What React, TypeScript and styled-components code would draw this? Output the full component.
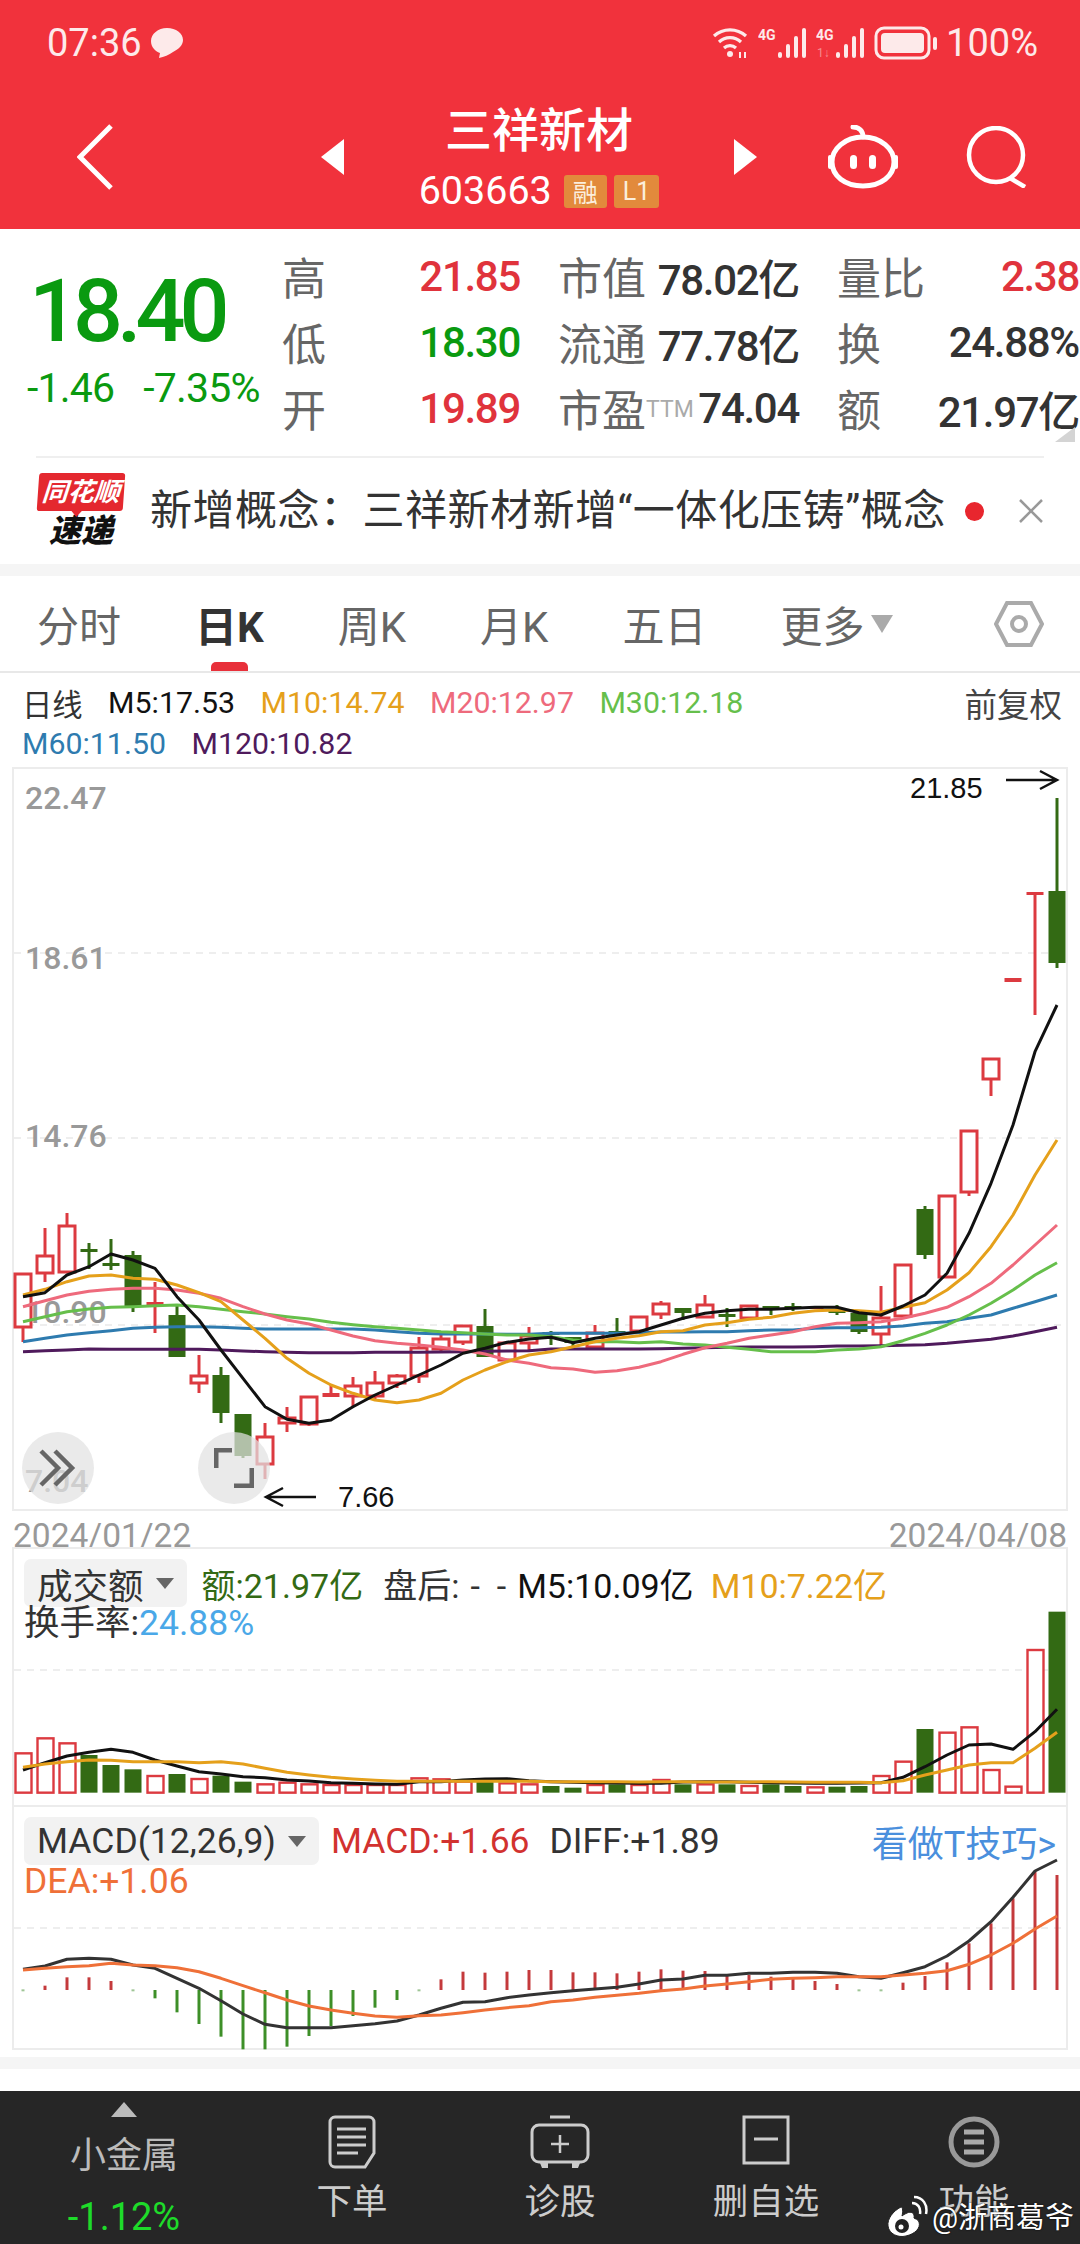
import { FC } from 'react'
import styled, { createGlobalStyle } from 'styled-components'

const GlobalStyle = createGlobalStyle`
  html, body { margin: 0; padding: 0; background: #fff; }
  body { font-family: Roboto, "Noto Sans CJK SC", sans-serif; }
`

const RED = '#dc3a40'
const GREEN = '#336a14'
const ORANGE = '#e5a01b'
const PINK = '#ee6a7c'
const LIME = '#66bf4b'
const BLUE = '#2e7baf'
const PURPLE = '#4f1a5c'

const xAt = (i: number) => 23 + 22 * i

// zoomed chart readings, left half and right half have their own base
const toLine = (left: number[], leftBase: number, right: number[], rightBase: number) =>
  [...left.map((y) => leftBase + y / 3), ...right.map((y) => rightBase + y / 3)]
    .map((y, i) => `${xAt(i)},${y.toFixed(1)}`)
    .join(' ')

// top, bottom, high, low, colour
type Candle = [number, number, number, number, 'r' | 'g']
const candles: Candle[] = [
  [1274, 1327, 1274, 1342, 'r'], [1256, 1273, 1228, 1282, 'r'], [1226, 1272, 1213, 1272, 'r'],
  [1249, 1252, 1243, 1269, 'g'], [1263, 1266, 1239, 1270, 'g'], [1255, 1306, 1251, 1312, 'g'],
  [1302, 1305, 1282, 1333, 'r'], [1315, 1357, 1304, 1357, 'g'], [1376, 1383, 1355, 1393, 'r'],
  [1375, 1413, 1367, 1423, 'g'], [1414, 1456, 1414, 1458, 'g'], [1437, 1464, 1423, 1479, 'r'],
  [1418, 1423, 1407, 1432, 'r'], [1397, 1424, 1397, 1426, 'r'], [1393, 1397, 1385, 1397, 'r'],
  [1386, 1396, 1377, 1406, 'r'], [1383, 1396, 1371, 1400, 'r'], [1376, 1383, 1374, 1388, 'r'],
  [1348, 1376, 1337, 1383, 'r'], [1339, 1349, 1332, 1352, 'r'], [1326, 1342, 1326, 1345, 'r'],
  [1326, 1357, 1309, 1357, 'g'], [1343, 1360, 1343, 1362, 'r'], [1336, 1343, 1327, 1350, 'r'],
  [1332, 1335, 1331, 1345, 'g'], [1337, 1343, 1337, 1347, 'g'], [1333, 1347, 1325, 1347, 'r'],
  [1331, 1335, 1318, 1335, 'g'], [1317, 1331, 1317, 1331, 'r'], [1304, 1314, 1301, 1319, 'r'],
  [1308, 1313, 1308, 1320, 'g'], [1305, 1317, 1295, 1318, 'r'], [1314, 1317, 1308, 1327, 'g'],
  [1306, 1318, 1306, 1318, 'r'], [1306, 1309, 1306, 1315, 'g'], [1306, 1308, 1303, 1311, 'g'],
  [1307, 1309, 1307, 1309, 'r'], [1309, 1313, 1305, 1315, 'g'], [1313, 1332, 1313, 1334, 'g'],
  [1318, 1334, 1286, 1345, 'r'], [1265, 1316, 1265, 1316, 'r'], [1209, 1255, 1206, 1259, 'g'],
  [1196, 1277, 1196, 1277, 'r'], [1131, 1192, 1131, 1196, 'r'], [1059, 1079, 1059, 1096, 'r'],
  [978, 982, 978, 982, 'r'], [892, 895, 892, 1015, 'r'], [891, 963, 798, 968, 'g'],
]

const m5 = toLine(
  [440, 428, 375, 350, 312, 330, 355, 440, 510, 600, 685, 770, 808, 820, 810, 770, 735, 705, 675, 645, 610, 595, 577, 567], 1150,
  [1012, 1028, 1015, 1005, 995, 975, 955, 940, 932, 928, 928, 925, 922, 922, 938, 945, 918, 885, 820, 700, 550, 375, 155, 15], 1000,
)
const m10 = toLine(
  [435, 418, 395, 378, 375, 385, 388, 405, 428, 455, 510, 565, 625, 670, 705, 730, 750, 758, 750, 730, 690, 660, 635, 615], 1150,
  [1055, 1040, 1025, 1015, 1007, 995, 992, 975, 968, 958, 952, 940, 932, 930, 932, 937, 922, 908, 870, 818, 740, 645, 525, 420], 1000,
)
const m20 = toLine(
  [470, 452, 435, 424, 418, 415, 415, 420, 430, 445, 470, 492, 510, 522, 540, 558, 572, 580, 585, 592, 600, 612, 630, 640], 1150,
  [1103, 1107, 1117, 1112, 1102, 1085, 1063, 1043, 1030, 1015, 1005, 995, 980, 970, 968, 965, 955, 940, 922, 890, 850, 795, 735, 675], 1000,
)
const m30 = toLine(
  [515, 500, 485, 477, 472, 470, 467, 465, 470, 478, 485, 492, 500, 507, 517, 524, 530, 535, 540, 545, 548, 552, 555, 555], 1150,
  [1010, 1020, 1025, 1025, 1028, 1025, 1032, 1035, 1042, 1048, 1055, 1055, 1055, 1050, 1047, 1040, 1022, 1000, 975, 945, 910, 870, 825, 788], 1000,
)
const m60 = toLine(
  [575, 565, 555, 548, 542, 535, 532, 530, 530, 532, 535, 537, 537, 537, 537, 537, 540, 545, 550, 552, 552, 552, 553, 553], 1150,
  [1000, 1000, 1000, 1000, 998, 996, 996, 995, 995, 992, 990, 990, 985, 983, 983, 982, 978, 970, 965, 955, 945, 925, 905, 885], 1000,
)
const m120 = toLine(
  [605, 602, 600, 597, 598, 598, 598, 598, 598, 600, 603, 605, 607, 608, 608, 608, 607, 607, 607, 606, 605, 604, 603, 602], 1150,
  [1047, 1047, 1047, 1047, 1047, 1046, 1045, 1043, 1042, 1041, 1041, 1041, 1040, 1038, 1038, 1037, 1036, 1034, 1030, 1024, 1018, 1008, 995, 982], 1000,
)

const volBars: [number, 'r' | 'g'][] = [
  [640, 'r'], [595, 'r'], [610, 'r'], [645, 'g'], [675, 'g'], [688, 'g'], [708, 'r'], [702, 'g'], [717, 'r'], [707, 'g'],
  [725, 'g'], [733, 'r'], [728, 'r'], [733, 'r'], [735, 'r'], [735, 'r'], [735, 'r'], [735, 'r'], [715, 'r'], [718, 'r'],
  [725, 'r'], [718, 'g'], [730, 'r'], [733, 'r'], [738, 'g'], [743, 'g'], [735, 'r'], [733, 'g'], [735, 'r'], [720, 'r'],
  [733, 'g'], [733, 'r'], [733, 'g'], [738, 'r'], [733, 'g'], [738, 'g'], [742, 'r'], [740, 'g'], [738, 'g'], [708, 'r'],
  [665, 'r'], [567, 'g'], [578, 'r'], [562, 'r'], [690, 'r'], [740, 'r'], [330, 'r'], [215, 'g'],
]
const volM5 = toLine(
  [690, 668, 648, 637, 628, 637, 660, 678, 695, 702, 710, 713, 720, 723, 728, 730, 732, 733, 725, 725, 720, 717, 716, 722], 1540,
  [725, 727, 728, 729, 730, 730, 726, 725, 725, 727, 728, 729, 730, 730, 729, 728, 712, 680, 645, 615, 612, 628, 575, 508], 1540,
)
const volM10 = toLine(
  [682, 672, 665, 660, 661, 665, 665, 665, 668, 665, 672, 685, 697, 705, 712, 717, 721, 724, 724, 724, 724, 724, 724, 724], 1540,
  [725, 725, 725, 725, 726, 725, 725, 726, 726, 726, 725, 726, 727, 727, 727, 728, 722, 705, 690, 675, 668, 668, 625, 577], 1540,
)

const macdBars = [
  603, 587, 562, 562, 573, 603, 625, 667, 702, 740, 778, 778, 770, 738, 708, 678, 653, 630, 597, 568, 545, 548, 545, 540,
  540, 547, 547, 550, 545, 538, 542, 543, 553, 555, 560, 565, 573, 582, 603, 603, 578, 558, 517, 460, 400, 325, 245, 255,
]
const diff = toLine(
  [538, 528, 508, 505, 508, 525, 535, 565, 595, 632, 672, 703, 713, 713, 713, 707, 701, 693, 675, 655, 637, 635, 623, 615], 1790,
  [608, 602, 597, 592, 582, 570, 567, 556, 556, 550, 550, 547, 547, 550, 560, 565, 548, 530, 498, 453, 395, 322, 243, 210], 1790,
)
const dea = toLine(
  [540, 535, 530, 527, 520, 525, 527, 533, 545, 565, 587, 608, 630, 648, 660, 670, 678, 682, 677, 675, 668, 660, 653, 647], 1790,
  [635, 630, 622, 616, 610, 602, 597, 588, 582, 575, 568, 565, 563, 560, 560, 560, 555, 550, 542, 523, 495, 460, 417, 378], 1790,
)

const Page = styled.div`
  width: 1080px;
  height: 2244px;
  overflow: hidden;
  position: relative;
  display: flex;
  flex-direction: column;
  background: #fff;
`

const Header = styled.header`
  height: 229px;
  background: #f1323c;
  color: #fff;
  display: flex;
  flex-direction: column;
`

const StatusBar = styled.div`
  height: 85px;
  padding: 0 42px 0 47px;
  display: flex;
  align-items: center;
  justify-content: space-between;
`

const StatusGroup = styled.div`
  display: flex;
  align-items: center;
  gap: 8px;
  color: #fdeaea;
`

const StatusText = styled.span`
  font-size: 38px;
  line-height: 44px;
`

const NavBar = styled.div`
  height: 144px;
  padding-left: 77px;
  display: flex;
  align-items: center;
`

const NavTriangle = styled.div<{ $dir: 'left' | 'right' }>`
  width: 0;
  height: 0;
  border-top: 18px solid transparent;
  border-bottom: 18px solid transparent;
  ${(p) => (p.$dir === 'left' ? 'border-right: 23px solid #fff; margin-left: 207px;' : 'border-left: 23px solid #fff;')}
`

const NavCenter = styled.div`
  width: 390px;
  height: 144px;
  padding-top: 19px;
  box-sizing: border-box;
  display: flex;
  flex-direction: column;
  align-items: center;
`

const NavAction = styled.div<{ $ml: number }>`
  margin-left: ${(p) => p.$ml}px;
  display: flex;
`

const StockName = styled.div`
  font-size: 47px;
  line-height: 54px;
  font-weight: 500;
`

const CodeRow = styled.div`
  margin-top: 15px;
  display: flex;
  align-items: center;
  gap: 7px;
`

const StockCode = styled.span`
  font-size: 39.5px;
  line-height: 36px;
  margin-right: 5px;
`

const Badge = styled.span`
  height: 33px;
  padding: 0 9px;
  display: flex;
  align-items: center;
  border-radius: 3px;
  background: #e28a3c;
  color: #fbeedd;
  font-size: 25px;
`

const QuoteSection = styled.section`
  height: 227px;
  padding: 14px 0 0 27px;
  box-sizing: border-box;
  position: relative;
  display: flex;
`

const PriceColumn = styled.div`
  width: 255px;
  color: #0a9a10;
`

const Price = styled.div`
  padding-left: 2px;
  font-size: 88px;
  line-height: 92px;
  font-weight: 500;
  letter-spacing: -6px;
  margin-top: 22px;
`

const PriceChange = styled.div`
  margin-top: 9px;
  display: flex;
  gap: 29px;
  font-size: 41px;
  line-height: 44px;
  letter-spacing: -0.8px;
`

const QuoteGrid = styled.div`
  display: grid;
  grid-template-columns: 238px 241px 242px;
  grid-auto-rows: 66px;
  column-gap: 38px;
`

const QuoteCell = styled.div`
  display: flex;
  align-items: center;
  justify-content: space-between;
  white-space: nowrap;
`

const QuoteLabel = styled.span`
  font-size: 44px;
  color: #666;
`

const QuoteValue = styled.span<{ $color?: string }>`
  font-size: 42px;
  font-weight: 500;
  letter-spacing: -1.3px;
  color: ${(p) => p.$color || '#333'};
`

const Ttm = styled.sup`
  font-size: 23px;
  color: #aaa;
  vertical-align: 10px;
  line-height: 0;
`

const CornerMark = styled.div`
  position: absolute;
  right: 5px;
  top: 198px;
  width: 0;
  height: 0;
  border-left: 20px solid transparent;
  border-bottom: 15px solid #d4d4d4;
`

const NewsWrap = styled.div`
  height: 108px;
  padding: 0 36px;
`

const NewsRow = styled.div`
  height: 106px;
  border-top: 2px solid #efefef;
  display: flex;
  align-items: center;
`

const NewsLogo = styled.div`
  width: 90px;
  height: 76px;
  display: flex;
  flex-direction: column;
  align-items: center;
`

const LogoFlag = styled.div`
  width: 86px;
  height: 38px;
  background: #e4282f;
  color: #fff;
  border-radius: 3px;
  transform: skewX(-4deg);
  font-size: 26px;
  line-height: 38px;
  font-weight: 700;
  font-style: italic;
  text-align: center;
  position: relative;
  &::after {
    content: '';
    position: absolute;
    left: 34px;
    bottom: -6px;
    border-left: 6px solid transparent;
    border-right: 6px solid transparent;
    border-top: 7px solid #e4282f;
  }
`

const LogoText = styled.div`
  margin-top: 3px;
  color: #111;
  font-size: 32px;
  line-height: 34px;
  font-weight: 900;
  font-style: italic;
`

const NewsText = styled.div`
  margin-left: 24px;
  font-size: 42px;
  line-height: 50px;
  color: #333;
  white-space: nowrap;
  letter-spacing: 0.5px;
`

const NewsDot = styled.div`
  width: 19px;
  height: 19px;
  margin-left: auto;
  border-radius: 50%;
  background: #e8262e;
`

const NewsClose = styled.svg`
  margin-left: 34px;
`

const Band = styled.div<{ $h: number; $grey?: boolean }>`
  height: ${(p) => p.$h}px;
  background: ${(p) => (p.$grey ? '#f5f5f5' : '#fff')};
  flex: none;
`

const TabBar = styled.nav`
  height: 97px;
  padding-left: 37px;
  box-sizing: border-box;
  border-bottom: 2px solid #e8e8e8;
  display: flex;
  align-items: center;
  gap: 74px;
`

const Tab = styled.div<{ $active?: boolean }>`
  position: relative;
  height: 95px;
  display: flex;
  align-items: center;
  font-size: 42px;
  color: ${(p) => (p.$active ? '#333' : '#666')};
  font-weight: ${(p) => (p.$active ? 700 : 400)};
  white-space: nowrap;
  ${(p) =>
    p.$active &&
    `&::after {
      content: '';
      position: absolute;
      left: 16px;
      bottom: 0;
      width: 37px;
      height: 9px;
      border-radius: 5px 5px 0 0;
      background: #e8303a;
    }`}
`

const TabCaret = styled.span`
  width: 0;
  height: 0;
  margin-left: 7px;
  border-left: 11px solid transparent;
  border-right: 11px solid transparent;
  border-top: 18px solid #aaa;
`

const TabSettings = styled.div`
  margin-left: auto;
  margin-right: 36px;
  display: flex;
`

const LegendBlock = styled.div`
  height: 94px;
  padding: 9px 18px 0 22px;
  box-sizing: border-box;
`

const LegendRow = styled.div`
  height: 41px;
  display: flex;
  align-items: center;
  gap: 25.5px;
  font-size: 30.3px;
  white-space: nowrap;
`

const LegendItem = styled.span<{ $color: string }>`
  color: ${(p) => p.$color};
`

const LegendEnd = styled.span`
  margin-left: auto;
  color: #444;
  font-size: 32.5px;
`

const Panel = styled.div<{ $h: number; $noTop?: boolean }>`
  height: ${(p) => p.$h}px;
  margin: 0 12px;
  box-sizing: border-box;
  flex: none;
  border: 2px solid #ececec;
  ${(p) => p.$noTop && 'border-top: 0;'}
  display: grid;
  position: relative;
  & > * {
    grid-area: 1 / 1;
  }
`

const ChartSvg = styled.svg`
  display: block;
  width: 100%;
  height: 100%;
  overflow: visible;
`

const AxisText = styled.text`
  font-family: Roboto, sans-serif;
  font-size: 32px;
  font-weight: 500;
  fill: #999;
`

const MarkText = styled.text`
  font-family: "Liberation Sans", sans-serif;
  font-size: 29px;
  fill: #111;
`

const RoundButton = styled.div<{ $left: number }>`
  position: absolute;
  left: ${(p) => p.$left}px;
  top: 663px;
  width: 72px;
  height: 72px;
  border-radius: 50%;
  background: rgba(226, 226, 226, 0.72);
  display: flex;
  align-items: center;
  justify-content: center;
`

const DateRow = styled.div`
  height: 36px;
  flex: none;
  padding: 10px 13px 0 13px;
  box-sizing: border-box;
  display: flex;
  justify-content: space-between;
  font-size: 33.5px;
  line-height: 29px;
  color: #999;
`

const IndicatorHead = styled.div`
  padding: 10px 10px 0;
  align-self: start;
`

const IndicatorRow = styled.div<{ $size: number; $gap: number }>`
  display: flex;
  align-items: center;
  gap: ${(p) => p.$gap}px;
  height: 48px;
  font-size: ${(p) => p.$size}px;
  white-space: nowrap;
`

const IndicatorRowSecond = styled.div`
  height: 32px;
  font-size: 35.5px;
  line-height: 32px;
  white-space: nowrap;
`

const Chip = styled.div`
  height: 48px;
  padding: 0 13px;
  display: flex;
  align-items: center;
  gap: 12px;
  border-radius: 7px;
  background: #f2f2f2;
  color: #333;
  font-size: 35.5px;
`

const ChipCaret = styled.span`
  width: 0;
  height: 0;
  border-left: 9px solid transparent;
  border-right: 9px solid transparent;
  border-top: 11px solid #666;
`

const IndicatorText = styled.span<{ $color: string; $ml?: number }>`
  color: ${(p) => p.$color};
  margin-left: ${(p) => p.$ml || 0}px;
`

const Dashes = styled.span`
  padding-left: 11px;
  letter-spacing: 17px;
  margin-right: -23px;
`

const TipLink = styled.span`
  margin-left: auto;
  color: #4a8fdd;
  font-size: 36px;
`

const BottomBar = styled.footer`
  flex: 1;
  background: #262626;
  display: grid;
  grid-template-columns: 248px 208px 208px 204px 212px;
`

const MarketCell = styled.div`
  padding-top: 11px;
  display: flex;
  flex-direction: column;
  align-items: center;
`

const MarketCaret = styled.div`
  width: 0;
  height: 0;
  border-left: 13px solid transparent;
  border-right: 13px solid transparent;
  border-bottom: 15px solid #bbb;
`

const MarketName = styled.div`
  margin-top: 19px;
  font-size: 36px;
  line-height: 40px;
  color: #bbb;
`

const MarketPct = styled.div`
  margin-top: 21px;
  font-size: 38px;
  line-height: 40px;
  color: #1edb2a;
`

const ActionCell = styled.div`
  padding-top: 24px;
  display: flex;
  flex-direction: column;
  align-items: center;
`

const ActionIcon = styled.div`
  height: 54px;
  display: flex;
  align-items: flex-start;
`

const ActionLabel = styled.div`
  margin-top: 13px;
  font-size: 35.5px;
  line-height: 40px;
  color: #ccc;
`

const Watermark = styled.div`
  position: absolute;
  right: 6px;
  top: 2195px;
  display: flex;
  align-items: center;
  gap: 4px;
  color: #fff;
  font-size: 29px;
  line-height: 46px;
  text-shadow: 0 0 2px #000;
`

const Wifi: FC = () => (
  <svg width="38" height="32" viewBox="0 0 38 32" fill="none" stroke="#fdeaea" strokeWidth="3.2">
    <path d="M2 9 A24 24 0 0 1 34 9" />
    <path d="M7 15 A16 16 0 0 1 29 15" />
    <path d="M12 21 A9 9 0 0 1 24 21" />
    <circle cx="18" cy="27" r="3" fill="#fdeaea" stroke="none" />
    <path d="M28 25v6M33 25v6" strokeWidth="2" />
  </svg>
)

const Signal: FC<{ sim2?: boolean }> = ({ sim2 }) => (
  <svg width="50" height="32" viewBox="0 0 50 32" fill="#fdeaea">
    <text x="0" y="13" fontFamily="Roboto, sans-serif" fontSize="14" fontWeight="700">4G</text>
    {sim2 && <text x="1" y="30" fontFamily="Roboto, sans-serif" fontSize="12" fill="#f68b90">1↓</text>}
    <rect x="20" y="25" width="4" height="6" rx="2" />
    <rect x="28" y="17" width="4" height="14" rx="2" />
    <rect x="36" y="9" width="4" height="22" rx="2" />
    <rect x="44" y="1" width="4" height="30" rx="2" />
  </svg>
)

const Battery: FC = () => (
  <svg width="64" height="34" viewBox="0 0 64 34" fill="none">
    <rect x="2" y="2" width="53" height="30" rx="8" stroke="#fdeaea" strokeWidth="3" />
    <rect x="7" y="7" width="43" height="20" rx="4" fill="#fdeaea" />
    <rect x="59" y="11" width="4" height="13" rx="2" fill="#fdeaea" />
  </svg>
)

const Bubble: FC = () => (
  <svg width="34" height="32" viewBox="0 0 34 32" fill="#fdeaea">
    <path d="M17 1C8 1 1 7 1 14c0 6 4 10 9 12l-1 5c5-1 10-3 14-6 6-3 10-7 10-12C33 6 26 1 17 1z" />
  </svg>
)

const Back: FC = () => (
  <svg width="37" height="66" viewBox="0 0 37 66" fill="none" stroke="#fff" strokeWidth="5">
    <polyline points="34,2 3,33 34,64" />
  </svg>
)

const Robot: FC = () => (
  <svg width="72" height="64" viewBox="0 0 72 64" fill="none" stroke="#fff" strokeWidth="5">
    <path d="M26 2c6 0 10 4 10 10" strokeLinecap="round" />
    <path d="M36 12C18 12 5 24 5 37c0 14 13 24 31 24s31-10 31-24C67 24 54 12 36 12z" />
    <path d="M3 32v10M69 32v10" strokeWidth="4" strokeLinecap="round" />
    <rect x="23" y="30" width="7" height="14" rx="3.5" fill="#fff" stroke="none" />
    <rect x="42" y="30" width="7" height="14" rx="3.5" fill="#fff" stroke="none" />
  </svg>
)

const Search: FC = () => (
  <svg width="62" height="62" viewBox="0 0 62 62" fill="none" stroke="#fff" strokeWidth="4.5">
    <circle cx="30" cy="29" r="27" />
    <path d="M44 52l15 9" />
  </svg>
)

const HexIcon: FC = () => (
  <svg width="50" height="46" viewBox="0 0 50 46" fill="none" stroke="#aaa" strokeWidth="4">
    <polygon points="13,2 37,2 48,23 37,44 13,44 2,23" />
    <circle cx="25" cy="23" r="7" />
  </svg>
)

const Rewind: FC = () => (
  <svg width="40" height="40" viewBox="0 0 40 40" fill="none" stroke="#666" strokeWidth="4.5">
    <polyline points="3,3 20,20 3,37" />
    <polyline points="17,3 34,20 17,37" />
  </svg>
)

const Expand: FC = () => (
  <svg width="40" height="40" viewBox="0 0 40 40" fill="none" stroke="#666" strokeWidth="5">
    <polyline points="2,20 2,2 18,2" />
    <polyline points="38,20 38,38 20,38" />
  </svg>
)

const DocIcon: FC = () => (
  <svg width="48" height="54" viewBox="0 0 48 54" fill="none" stroke="#ccc" strokeWidth="3">
    <path d="M7 2h34a5 5 0 0 1 5 5v31l-9 14H7a5 5 0 0 1-5-5V7a5 5 0 0 1 5-5z" />
    <path d="M9 14h29M9 22h29M9 30h29M9 38h21" />
  </svg>
)

const AddIcon: FC = () => (
  <svg width="60" height="54" viewBox="0 0 60 54" fill="none" stroke="#ccc" strokeWidth="3">
    <path d="M20 2h20" />
    <rect x="2" y="10" width="56" height="37" rx="7" />
    <path d="M30 20v18M21 29h18" strokeWidth="2.5" />
    <path d="M10 48h8v5h-6zM42 48h8l-2 5h-6z" fill="#ccc" stroke="none" />
  </svg>
)

const RemoveIcon: FC = () => (
  <svg width="48" height="50" viewBox="0 0 48 50" fill="none" stroke="#ccc" strokeWidth="3">
    <rect x="2" y="2" width="44" height="46" />
    <path d="M12 24h24" />
  </svg>
)

const MenuIcon: FC = () => (
  <svg width="52" height="54" viewBox="0 0 52 54" fill="none" stroke="#999" strokeWidth="5">
    <circle cx="26" cy="27" r="23" />
    <path d="M16 17h20M16 27h20M16 37h20" stroke="#aaa" strokeWidth="5" />
  </svg>
)

const WeiboIcon: FC = () => (
  <svg width="42" height="46" viewBox="0 0 42 46" fill="none">
    <path d="M15 12C7 16 1 24 2 31c1 8 10 12 18 10 9-2 15-8 13-14-1-3-4-3-5-4 1-5-3-7-7-5-2 1-4 2-5 3 1-4 1-9-1-9z" fill="#fff" stroke="#222" strokeWidth="1" />
    <circle cx="16" cy="31" r="7" fill="#222" />
    <circle cx="15" cy="32" r="2.5" fill="#fff" />
    <path d="M26 8c6 0 9 5 8 11M28 2c9 0 14 8 12 17" stroke="#fff" strokeWidth="2.5" />
  </svg>
)

const CandleMark: FC<{ c: Candle; i: number }> = ({ c, i }) => {
  const [top, bottom, high, low, tone] = c
  const x = xAt(i)
  const color = tone === 'r' ? RED : GREEN
  const thin = bottom - top < 5
  return (
    <g>
      <line x1={x} x2={x} y1={high} y2={low} stroke={color} strokeWidth="3" />
      {thin ? (
        <rect x={x - 8.5} y={top} width="17" height={bottom - top} fill={color} />
      ) : tone === 'r' ? (
        <rect x={x - 8} y={top} width="16" height={bottom - top} fill="#fff" stroke={color} strokeWidth="3" />
      ) : (
        <rect x={x - 8.5} y={top} width="17" height={bottom - top} fill={color} />
      )}
    </g>
  )
}

const Curve: FC<{ points: string; color: string; w?: number }> = ({ points, color, w = 3 }) => (
  <polyline points={points} fill="none" stroke={color} strokeWidth={w} strokeLinejoin="round" />
)

const GridLine: FC<{ y: number }> = ({ y }) => (
  <line x1="14" x2="1066" y1={y} y2={y} stroke="#e9e9e9" strokeWidth="1.5" strokeDasharray="7 6" />
)

const tabs = ['分时', '日K', '周K', '月K', '五日']

const App: FC = () => (
  <Page>
    <GlobalStyle />
    <Header>
      <StatusBar>
        <StatusGroup>
          <StatusText>07:36</StatusText>
          <Bubble />
        </StatusGroup>
        <StatusGroup>
          <Wifi />
          <Signal />
          <Signal sim2 />
          <Battery />
          <StatusText>100%</StatusText>
        </StatusGroup>
      </StatusBar>
      <NavBar>
        <Back />
        <NavTriangle $dir="left" />
        <NavCenter>
          <StockName>三祥新材</StockName>
          <CodeRow>
            <StockCode>603663</StockCode>
            <Badge>融</Badge>
            <Badge>L1</Badge>
          </CodeRow>
        </NavCenter>
        <NavTriangle $dir="right" />
        <NavAction $ml={70}><Robot /></NavAction>
        <NavAction $ml={67}><Search /></NavAction>
      </NavBar>
    </Header>

    <QuoteSection>
      <PriceColumn>
        <Price>18.40</Price>
        <PriceChange>
          <span>-1.46</span>
          <span>-7.35%</span>
        </PriceChange>
      </PriceColumn>
      <QuoteGrid>
        <QuoteCell><QuoteLabel>高</QuoteLabel><QuoteValue $color="#e0333c">21.85</QuoteValue></QuoteCell>
        <QuoteCell><QuoteLabel>市值</QuoteLabel><QuoteValue>78.02亿</QuoteValue></QuoteCell>
        <QuoteCell><QuoteLabel>量比</QuoteLabel><QuoteValue $color="#e0333c">2.38</QuoteValue></QuoteCell>
        <QuoteCell><QuoteLabel>低</QuoteLabel><QuoteValue $color="#0a9a10">18.30</QuoteValue></QuoteCell>
        <QuoteCell><QuoteLabel>流通</QuoteLabel><QuoteValue>77.78亿</QuoteValue></QuoteCell>
        <QuoteCell><QuoteLabel>换</QuoteLabel><QuoteValue>24.88%</QuoteValue></QuoteCell>
        <QuoteCell><QuoteLabel>开</QuoteLabel><QuoteValue $color="#e0333c">19.89</QuoteValue></QuoteCell>
        <QuoteCell><QuoteLabel>市盈<Ttm>TTM</Ttm></QuoteLabel><QuoteValue>74.04</QuoteValue></QuoteCell>
        <QuoteCell><QuoteLabel>额</QuoteLabel><QuoteValue>21.97亿</QuoteValue></QuoteCell>
      </QuoteGrid>
      <CornerMark />
    </QuoteSection>

    <NewsWrap>
      <NewsRow>
        <NewsLogo>
          <LogoFlag>同花顺</LogoFlag>
          <LogoText>速递</LogoText>
        </NewsLogo>
        <NewsText>新增概念：三祥新材新增“一体化压铸”概念</NewsText>
        <NewsDot />
        <NewsClose width="26" height="26" viewBox="0 0 26 26" stroke="#999" strokeWidth="2.5">
          <path d="M2 2l22 22M24 2L2 24" />
        </NewsClose>
      </NewsRow>
    </NewsWrap>

    <Band $h={12} $grey />

    <TabBar>
      {tabs.map((t) => (
        <Tab key={t} $active={t === '日K'}>{t}</Tab>
      ))}
      <Tab>更多<TabCaret /></Tab>
      <TabSettings><HexIcon /></TabSettings>
    </TabBar>

    <LegendBlock>
      <LegendRow>
        <LegendItem $color="#333">日线</LegendItem>
        <LegendItem $color="#111">M5:17.53</LegendItem>
        <LegendItem $color={ORANGE}>M10:14.74</LegendItem>
        <LegendItem $color={PINK}>M20:12.97</LegendItem>
        <LegendItem $color={LIME}>M30:12.18</LegendItem>
        <LegendEnd>前复权</LegendEnd>
      </LegendRow>
      <LegendRow>
        <LegendItem $color={BLUE}>M60:11.50</LegendItem>
        <LegendItem $color={PURPLE}>M120:10.82</LegendItem>
      </LegendRow>
    </LegendBlock>

    <Panel $h={744}>
      <ChartSvg viewBox="14 769 1052 740">
        <GridLine y={953} />
        <GridLine y={1138} />
        <GridLine y={1325} />
        {candles.map((c, i) => (
          <CandleMark key={i} c={c} i={i} />
        ))}
        <AxisText x="25" y="809">22.47</AxisText>
        <AxisText x="25" y="969">18.61</AxisText>
        <AxisText x="25" y="1147">14.76</AxisText>
        <AxisText x="25" y="1323">10.90</AxisText>
        <AxisText x="25" y="1492">7.04</AxisText>
        <Curve points={m120} color={PURPLE} />
        <Curve points={m60} color={BLUE} />
        <Curve points={m30} color={LIME} />
        <Curve points={m20} color={PINK} />
        <Curve points={m10} color={ORANGE} />
        <Curve points={m5} color="#111" />
        <MarkText x="910" y="798">21.85</MarkText>
        <path d="M1006 780h50M1040 771l17 9-17 9" fill="none" stroke="#111" strokeWidth="2.5" />
        <MarkText x="338" y="1507">7.66</MarkText>
        <path d="M316 1497h-50M283 1488l-17 9 17 9" fill="none" stroke="#111" strokeWidth="2.5" />
      </ChartSvg>
      <RoundButton $left={8}><Rewind /></RoundButton>
      <RoundButton $left={184}><Expand /></RoundButton>
    </Panel>

    <DateRow>
      <span>2024/01/22</span>
      <span>2024/04/08</span>
    </DateRow>

    <Panel $h={260}>
      <ChartSvg viewBox="14 1549 1052 256">
        <GridLine y={1670} />
        {volBars.map(([top, tone], i) =>
          tone === 'g' ? (
            <rect key={i} x={xAt(i) - 8.5} y={1540 + top / 3} width="17" height={(758 - top) / 3} fill={GREEN} />
          ) : (
            <rect key={i} x={xAt(i) - 7.5} y={1540 + top / 3} width="16" height={(758 - top) / 3} fill="#fff" stroke={RED} strokeWidth="2.4" />
          ),
        )}
        <Curve points={volM5} color="#111" />
        <Curve points={volM10} color={ORANGE} />
      </ChartSvg>
      <IndicatorHead>
        <IndicatorRow $size={34} $gap={15}>
          <Chip>成交额<ChipCaret /></Chip>
          <IndicatorText $color={GREEN}>额:21.97亿</IndicatorText>
          <IndicatorText $color="#333" $ml={5}>盘后:<Dashes>--</Dashes></IndicatorText>
          <IndicatorText $color="#111" $ml={2}>M5:10.09亿</IndicatorText>
          <IndicatorText $color={ORANGE} $ml={2}>M10:7.22亿</IndicatorText>
        </IndicatorRow>
        <IndicatorRowSecond>
          <IndicatorText $color="#333">换手率:</IndicatorText>
          <IndicatorText $color="#4aa8e8">24.88%</IndicatorText>
        </IndicatorRowSecond>
      </IndicatorHead>
    </Panel>

    <Panel $h={243} $noTop>
      <ChartSvg viewBox="14 1807 1052 241">
        <GridLine y={1928} />
        {macdBars.map((top, i) => {
          const up = top < 600
          const small = Math.abs(top - 600) < 5
          return (
            <line
              key={i}
              x1={xAt(i)}
              x2={xAt(i)}
              y1={1790 + (small ? 598 : top) / 3}
              y2={1790 + (small ? 604 : 600) / 3}
              stroke={small ? '#9fc596' : up ? '#c43a3c' : '#3d8f28'}
              strokeWidth="3"
            />
          )
        })}
        <Curve points={diff} color="#333" />
        <Curve points={dea} color="#ef7038" />
      </ChartSvg>
      <IndicatorHead>
        <IndicatorRow $size={35.5} $gap={12}>
          <Chip>MACD(12,26,9)<ChipCaret /></Chip>
          <IndicatorText $color="#d2322f">MACD:+1.66</IndicatorText>
          <IndicatorText $color="#333" $ml={8}>DIFF:+1.89</IndicatorText>
          <TipLink>看做T技巧&gt;</TipLink>
        </IndicatorRow>
        <IndicatorRowSecond>
          <IndicatorText $color="#ef7038">DEA:+1.06</IndicatorText>
        </IndicatorRowSecond>
      </IndicatorHead>
    </Panel>

    <Band $h={7} />
    <Band $h={12} $grey />
    <Band $h={22} />

    <BottomBar>
      <MarketCell>
        <MarketCaret />
        <MarketName>小金属</MarketName>
        <MarketPct>-1.12%</MarketPct>
      </MarketCell>
      <ActionCell><ActionIcon><DocIcon /></ActionIcon><ActionLabel>下单</ActionLabel></ActionCell>
      <ActionCell><ActionIcon><AddIcon /></ActionIcon><ActionLabel>诊股</ActionLabel></ActionCell>
      <ActionCell><ActionIcon><RemoveIcon /></ActionIcon><ActionLabel>删自选</ActionLabel></ActionCell>
      <ActionCell><ActionIcon><MenuIcon /></ActionIcon><ActionLabel>功能</ActionLabel></ActionCell>
    </BottomBar>
    <Watermark>
      <WeiboIcon />
      <span>@浙商葛爷</span>
    </Watermark>
  </Page>
)

export default App
